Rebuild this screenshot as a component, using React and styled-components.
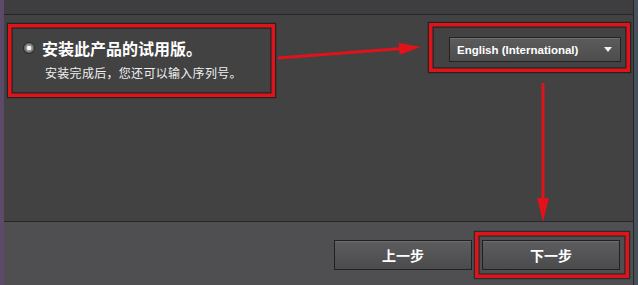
import React from "react";
import styled, { createGlobalStyle } from "styled-components";

const GlobalStyle = createGlobalStyle`
  html, body { margin: 0; padding: 0; background: #424243; }
  body { font-family: "Liberation Sans", "Noto Sans CJK SC", sans-serif; }
  * { box-sizing: border-box; }
`;

const Frame = styled.div`
  position: relative;
  width: 638px;
  height: 285px;
  display: flex;
  overflow: hidden;
  background: #424243;
`;

const SideStrip = styled.div`
  width: ${(p) => p.$w}px;
  flex: none;
  background: ${(p) => p.$bg};
  border-left: ${(p) => (p.$line ? `1px solid ${p.$line}` : "none")};
`;

const Main = styled.div`
  flex: 1;
  display: flex;
  flex-direction: column;
  min-width: 0;
`;

const TopBar = styled.div`
  height: 15px;
  flex: none;
  background: #3e3e40;
  border-bottom: 1px solid #262627;
`;

const Content = styled.div`
  flex: 1;
  display: flex;
  justify-content: space-between;
  align-items: flex-start;
  padding: 22px 12px 0 20px;
  background: #424243;
`;

const Option = styled.div`
  display: grid;
  grid-template-columns: 10px auto;
  column-gap: 8px;
  row-gap: 6px;
  align-items: center;
`;

const Radio = styled.span`
  width: 10px;
  height: 10px;
  border-radius: 50%;
  background: radial-gradient(circle at 50% 50%, #f4f4f4 0 2px, #a0a0a0 2.5px, #6a6a6a 4.5px);
  box-shadow: 0 0 0 1px #2b2b2b;
`;

const Title = styled.div`
  font-family: "Noto Sans CJK SC", sans-serif;
  font-weight: 700;
  font-size: 16px;
  line-height: 22px;
  color: #ffffff;
`;

const Subtitle = styled.div`
  grid-column: 2;
  padding-left: 3px;
  font-family: "Noto Sans CJK SC", sans-serif;
  font-size: 12px;
  letter-spacing: 0.3px;
  line-height: 16px;
  color: #f0f0f0;
`;

const Select = styled.div`
  width: 172px;
  height: 25px;
  display: flex;
  align-items: center;
  justify-content: space-between;
  padding: 0 8px 0 7px;
  background: linear-gradient(#5c5c5d, #4d4d4e);
  border: 1px solid #232324;
  box-shadow: inset 0 1px 0 rgba(255, 255, 255, 0.12);
  color: #ffffff;
  font-family: "Liberation Sans", sans-serif;
  font-weight: 700;
  font-size: 11.5px;
`;

const Caret = styled.span`
  width: 0;
  height: 0;
  border-left: 4.5px solid transparent;
  border-right: 4.5px solid transparent;
  border-top: 5px solid #f2f2f2;
`;

const Footer = styled.div`
  height: 64px;
  flex: none;
  display: flex;
  justify-content: flex-end;
  align-items: flex-start;
  gap: 10px;
  padding: 18px 13px 0 0;
  background: #4f4f51;
  border-top: 1px solid #262627;
`;

const Button = styled.button`
  width: 138px;
  height: 30px;
  padding: 0;
  background: linear-gradient(#5d5d5f, #4b4b4d);
  border: 1px solid #202021;
  box-shadow: inset 0 1px 0 rgba(255, 255, 255, 0.1);
  color: #ffffff;
  font-family: "Noto Sans CJK SC", sans-serif;
  font-weight: 700;
  font-size: 14px;
  cursor: pointer;
`;

const Annotations = styled.svg`
  position: absolute;
  left: 0;
  top: 0;
  pointer-events: none;
`;

const boxes = [
  { x: 9.75, y: 25.75, w: 263.5, h: 69.5 },
  { x: 430.75, y: 24.75, w: 197.5, h: 45.5 },
  { x: 476.75, y: 233.75, w: 150.5, h: 42.5 },
];

export default function App() {
  return (
    <>
      <GlobalStyle />
      <Frame>
        <SideStrip $w={4} $bg="#5b4a69" />
        <Main>
          <TopBar />
          <Content>
            <Option>
              <Radio />
              <Title>安装此产品的试用版。</Title>
              <Subtitle>安装完成后，您还可以输入序列号。</Subtitle>
            </Option>
            <Select>
              <span>English (International)</span>
              <Caret />
            </Select>
          </Content>
          <Footer>
            <Button>上一步</Button>
            <Button>下一步</Button>
          </Footer>
        </Main>
        <SideStrip $w={5} $bg="#46515c" $line="#262627" />
        <Annotations width="638" height="285" viewBox="0 0 638 285">
          {boxes.map((b, i) => (
            <g key={i}>
              <rect x={b.x} y={b.y} width={b.w} height={b.h} fill="none" stroke="rgba(0,0,0,0.45)" strokeWidth="6" />
              <rect x={b.x} y={b.y} width={b.w} height={b.h} fill="none" stroke="#e0121a" strokeWidth="3.5" />
            </g>
          ))}
          <line x1="278" y1="58" x2="402" y2="48.6" stroke="#e0121a" strokeWidth="3" />
          <polygon points="421,47 398.6,42.7 399.6,54.7" fill="#e0121a" />
          <line x1="543" y1="83" x2="543" y2="202" stroke="#e0121a" strokeWidth="3" />
          <polygon points="543,222 537,198 549,198" fill="#e0121a" />
        </Annotations>
      </Frame>
    </>
  );
}
